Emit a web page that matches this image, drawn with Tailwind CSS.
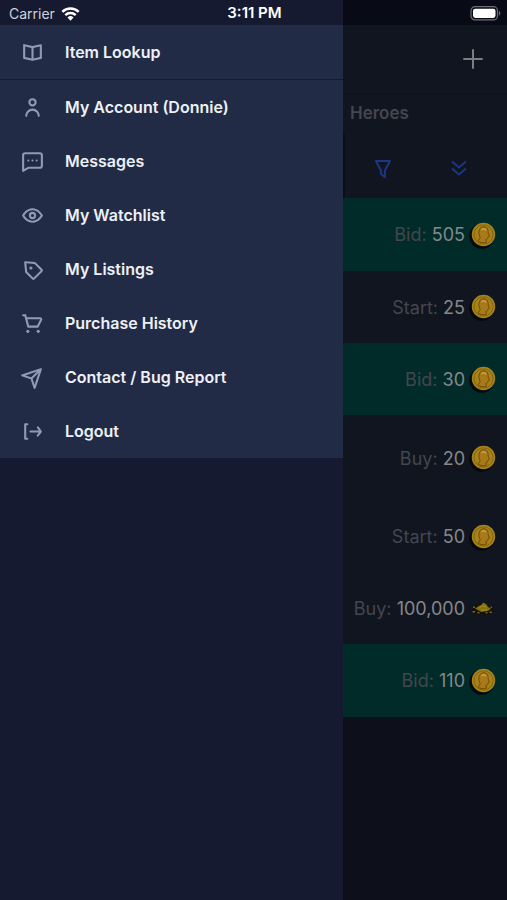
<!DOCTYPE html>
<html lang="en">
<head>
<meta charset="utf-8">
<meta name="viewport" content="width=device-width, initial-scale=1">
<title>Marketplace</title>
<script src="https://cdn.jsdelivr.net/npm/@tailwindcss/browser@4"></script>
</head>
<body class="bg-[#0d101b] font-['Inter',sans-serif]">
<svg class="hidden" aria-hidden="true">
  <defs>
    <radialGradient id="gold" cx="50%" cy="45%" r="55%">
      <stop offset="0" stop-color="#a87a12"/><stop offset="0.7" stop-color="#9a6d0e"/><stop offset="1" stop-color="#a58119"/>
    </radialGradient>
  </defs>
  <symbol id="coin" viewBox="0 0 28 28">
    <circle cx="12.800" cy="15.300" r="12.500" fill="#05080a" fill-opacity=".9"/>
    <circle cx="14.500" cy="13.500" r="11.700" fill="#a68319"/>
    <circle cx="14.500" cy="13.500" r="9.600" fill="url(#gold)" stroke="#86640f" stroke-width="1"/>
    <path d="M11 7.500c2-2.300 6-2.200 7.500.3 1 1.900.4 3.600 1 5.200l1 2.200-1.500.8c0 1.600-.6 2.500-2.200 2.400l.8 2.600c-3 1.400-6.500.8-8.600-1.200l2.300-3C9.600 14.600 9.300 10 11 7.500z" fill="#a97a1a" stroke="#744b09" stroke-width="1"/>
    <path d="M12.500 9c1.500-1.800 4-1.300 4.500.5" fill="none" stroke="#c29a48" stroke-width="1.600"/>
  </symbol>
  <symbol id="pile" viewBox="0 0 28 28">
    <path d="M3 16l4-4 4-2 3-2 4 2 3 3 3 2-1 4-4 2-5-1-5 1-5-2z" fill="#14120a"/>
    <path d="M6 14.500l4-2.500 2-1 2.500-2.500 3 2 1.500 2.500 3 1.500-3 2.500-4 .5-3 .5-3-2z" fill="#857010"/>
    <path d="M10.500 13.500l3-1.500 4 1M12 16h6" fill="none" stroke="#a88b22" stroke-width="1"/>
    <path d="M4 12.500h2V14H4zM3.500 17h2.500v1.500H3.500zM8.500 18h2v1.500h-2zM16.500 18h2v1.500h-2zM20.500 17.500H23V19h-2.500zM21.500 12.500H23V14h-1.500z" fill="#7a6510"/>
  </symbol>
</svg>

<div class="relative flex min-h-screen">
  <header class="absolute inset-x-0 top-0 z-10 grid h-[25px] grid-cols-3 items-center pt-[2px] pr-[6px] pl-2 text-[14px] text-[#e6e8ee]">
    <div class="flex items-center gap-[6px] pl-px">
      <span class="text-[#cfd2db]">Carrier</span>
      <svg class="h-[14px] w-[19px]" viewBox="0 0 19 14" role="img" aria-label="Wi-Fi" fill="none" stroke="#fff" stroke-width="2.400">
        <path d="M1.300 4.900a11.700 11.700 0 0 1 16.400 0M4.300 8.100a7.400 7.400 0 0 1 10.400 0"/>
        <path d="M9.500 13.700L6.500 10.500a4.300 4.300 0 0 1 6 0z" fill="#fff" stroke="none"/>
      </svg>
    </div>
    <div class="text-center text-[15px] font-semibold text-white">3:11 PM</div>
    <svg class="h-[15px] w-[31px] justify-self-end" viewBox="0 0 31 15" role="img" aria-label="Battery full">
      <rect x="1" y=".7" width="26.500" height="13.200" rx="4" fill="none" stroke="#6d6f76" stroke-width="1.200"/>
      <rect x="3" y="2.700" width="22.500" height="9.200" rx="2.300" fill="#fff"/>
      <path d="M29 5v4.600c1.800-.6 1.800-4 0-4.600z" fill="#6d6f76"/>
    </svg>
  </header>

  <aside class="w-[343px] shrink-0 bg-[#151a30] pt-[25px]">
    <nav class="bg-[#222b45] text-[16px] font-semibold text-[#edf1f7]">
      <a href="#" class="flex h-[54px] items-center gap-5 px-5">
        <svg class="size-[25px] fill-[#8f9bb3]" viewBox="0 0 24 24"><path d="M20.620 4.220a1 1 0 0 0-.84-.2L12 5.770 4.220 4A1 1 0 0 0 3 5v12.200a1 1 0 0 0 .78 1l8 1.800h.44l8-1.800a1 1 0 0 0 .78-1V5a1 1 0 0 0-.38-.78zM5 6.250l6 1.350v10.150L5 16.400zM19 16.400l-6 1.350V7.600l6-1.350z"/></svg>
        Item Lookup</a>
      <hr class="border-t border-[#151a30]">
      <a href="#" class="flex h-[54px] items-center gap-5 px-5">
        <svg class="size-[25px] fill-[#8f9bb3]" viewBox="0 0 24 24"><path d="M12 11a4 4 0 1 0-4-4 4 4 0 0 0 4 4zm0-6a2 2 0 1 1-2 2 2 2 0 0 1 2-2z"/><path d="M12 13a7 7 0 0 0-7 7 1 1 0 0 0 2 0 5 5 0 0 1 10 0 1 1 0 0 0 2 0 7 7 0 0 0-7-7z"/></svg>
        My Account (Donnie)</a>
      <a href="#" class="flex h-[54px] items-center gap-5 px-5">
        <svg class="size-[25px] fill-[#8f9bb3]" viewBox="0 0 24 24"><circle cx="12" cy="11" r="1"/><circle cx="16" cy="11" r="1"/><circle cx="8" cy="11" r="1"/><path d="M19 3H5a3 3 0 0 0-3 3v15a1 1 0 0 0 .51.87A1 1 0 0 0 3 22a1 1 0 0 0 .51-.14L8 19.140a1 1 0 0 1 .55-.14H19a3 3 0 0 0 3-3V6a3 3 0 0 0-3-3zm1 13a1 1 0 0 1-1 1H8.550a3 3 0 0 0-1.550.43l-3 1.800V6a1 1 0 0 1 1-1h14a1 1 0 0 1 1 1z"/></svg>
        Messages</a>
      <a href="#" class="flex h-[54px] items-center gap-5 px-5">
        <svg class="size-[25px] fill-[#8f9bb3]" viewBox="0 0 24 24"><path d="M21.870 11.500c-.64-1.110-4.160-6.680-10.140-6.500-5.530.14-8.730 5-9.600 6.500a1 1 0 0 0 0 1c.63 1.090 4 6.500 9.890 6.500h.25c5.530-.14 8.740-5 9.600-6.500a1 1 0 0 0 0-1zM12.220 17c-4.310.1-7.120-3.590-8-5 1-1.610 3.610-4.900 7.610-5 4.290-.11 7.110 3.590 8 5-1.030 1.610-3.610 4.900-7.610 5z"/><path d="M12 8.500a3.500 3.500 0 1 0 3.500 3.500A3.500 3.500 0 0 0 12 8.500zm0 5a1.500 1.500 0 1 1 1.500-1.500 1.500 1.500 0 0 1-1.500 1.500z"/></svg>
        My Watchlist</a>
      <a href="#" class="flex h-[54px] items-center gap-5 px-5">
        <svg class="size-[25px] fill-[#8f9bb3]" viewBox="0 0 24 24"><path d="M12.870 22a1.840 1.840 0 0 1-1.290-.53l-6.410-6.420a1 1 0 0 1-.29-.61L4 5.090a1 1 0 0 1 .29-.8 1 1 0 0 1 .8-.29l9.350.88a1 1 0 0 1 .61.29l6.420 6.410a1.820 1.820 0 0 1 0 2.570l-7.320 7.320a1.820 1.820 0 0 1-1.280.53zm-6-8.110l6 6 7.050-7.050-6-6-7.810-.73z"/><circle cx="10.500" cy="10.500" r="1.500"/></svg>
        My Listings</a>
      <a href="#" class="flex h-[54px] items-center gap-5 px-5">
        <svg class="size-[25px] fill-[#8f9bb3]" viewBox="0 0 24 24"><path d="M21.080 7a2 2 0 0 0-1.700-1H6.580L6 3.740A1 1 0 0 0 5 3H3a1 1 0 0 0 0 2h1.240L7 15.260A1 1 0 0 0 8 16h9a1 1 0 0 0 .89-.55l3.280-6.560A2 2 0 0 0 21.080 7zm-4.700 7H8.760L7.130 8h12.250z"/><circle cx="7.500" cy="19.500" r="1.500"/><circle cx="17.500" cy="19.500" r="1.500"/></svg>
        Purchase History</a>
      <a href="#" class="flex h-[54px] items-center gap-5 px-5">
        <svg class="size-[25px] fill-[#8f9bb3]" viewBox="0 0 24 24"><path d="M21 4a1.310 1.310 0 0 0-.06-.27v-.09a1 1 0 0 0-.2-.3 1 1 0 0 0-.29-.19h-.09a.86.86 0 0 0-.31-.15H20a1 1 0 0 0-.3 0l-18 6a1 1 0 0 0 0 1.900l8.530 2.840 2.840 8.530a1 1 0 0 0 1.900 0l6-18A1 1 0 0 0 21 4zm-4.700 2.290l-5.570 5.570L5.160 10zM14 18.840l-1.860-5.570 5.570-5.570z"/></svg>
        Contact / Bug Report</a>
      <a href="#" class="flex h-[54px] items-center gap-5 px-5">
        <svg class="size-[25px] fill-[#8f9bb3]" viewBox="0 0 24 24"><path d="M7 6a1 1 0 0 0 0-2H5a1 1 0 0 0-1 1v14a1 1 0 0 0 1 1h2a1 1 0 0 0 0-2H6V6zM20.820 11.420l-2.820-4a1 1 0 0 0-1.390-.24 1 1 0 0 0-.24 1.400L18.090 11H10a1 1 0 0 0 0 2h8l-1.800 2.400a1 1 0 0 0 .2 1.400 1 1 0 0 0 .6.200 1 1 0 0 0 .8-.4l3-4a1 1 0 0 0 .02-1.180z"/></svg>
        Logout</a>
    </nav>
  </aside>

  <main class="min-w-0 flex-1 text-[18px] text-[#43464f]">
    <div class="h-[25px] bg-[#080b16]"></div>
    <div class="flex h-[69px] items-center justify-end border-b border-[#0e111a] bg-[#11151f] px-[22px]">
      <button type="button" aria-label="Add listing">
        <svg class="size-6" viewBox="0 0 24 24" fill="none" stroke="#7b7d82" stroke-width="2" stroke-linecap="round"><path d="M12 3v18M3 12h18"/></svg>
      </button>
    </div>
    <div class="bg-[#11151f]">
      <h1 class="flex h-10 items-center px-[7px] text-[17px] font-semibold">Heroes</h1>
      <div class="flex h-16 items-center justify-between border-l-2 border-[#0b0e17] pr-[36px] pl-[26px] pt-1">
        <button type="button" aria-label="Filter">
          <svg class="size-6 fill-[#1c3682]" viewBox="0 0 24 24"><path d="M13.900 22a1 1 0 0 1-.6-.2l-4-3.050a1 1 0 0 1-.39-.8v-3.270l-4.800-9.220A1 1 0 0 1 5 4h14a1 1 0 0 1 .86.490 1 1 0 0 1 0 1l-5 9.210V21a1 1 0 0 1-.55.9 1 1 0 0 1-.41.1zm-3-4.540l2 1.530v-4.550A1 1 0 0 1 13 14l4.300-8H6.640l4.130 8a1 1 0 0 1 .11.46z"/></svg>
        </button>
        <button type="button" aria-label="Sort descending">
          <svg class="size-6" viewBox="0 0 24 24" fill="none" stroke="#1c3682" stroke-width="2"><path d="M5 5.500l7 6 7-6M5 12.500l7 6 7-6"/></svg>
        </button>
      </div>
    </div>
    <ul class="bg-[#11151f]">
      <li class="flex h-[73px] items-center justify-end gap-1 bg-[#012b28] pr-[10px]"><span>Bid: <b class="font-normal text-[#85888d]">505</b></span><svg class="size-7" role="img" aria-label="gold"><use href="#coin"/></svg></li>
      <li class="flex h-[72px] items-center justify-end gap-1 pr-[10px]"><span>Start: <b class="font-normal text-[#85888d]">25</b></span><svg class="size-7" role="img" aria-label="gold"><use href="#coin"/></svg></li>
      <li class="flex h-[72px] items-center justify-end gap-1 bg-[#012b28] pr-[10px]"><span>Bid: <b class="font-normal text-[#85888d]">30</b></span><svg class="size-7" role="img" aria-label="gold"><use href="#coin"/></svg></li>
      <li class="flex h-[86px] items-center justify-end gap-1 pr-[10px]"><span>Buy: <b class="font-normal text-[#85888d]">20</b></span><svg class="size-7" role="img" aria-label="gold"><use href="#coin"/></svg></li>
      <li class="flex h-[71px] items-center justify-end gap-1 pr-[10px]"><span>Start: <b class="font-normal text-[#85888d]">50</b></span><svg class="size-7" role="img" aria-label="gold"><use href="#coin"/></svg></li>
      <li class="flex h-[72px] items-center justify-end gap-1 pr-[10px]"><span>Buy: <b class="font-normal text-[#85888d]">100,000</b></span><svg class="size-7" role="img" aria-label="gold pile"><use href="#pile"/></svg></li>
      <li class="flex h-[73px] items-center justify-end gap-1 bg-[#012b28] pr-[10px]"><span>Bid: <b class="font-normal text-[#85888d]">110</b></span><svg class="size-7" role="img" aria-label="gold"><use href="#coin"/></svg></li>
    </ul>
  </main>
</div>
</body>
</html>
